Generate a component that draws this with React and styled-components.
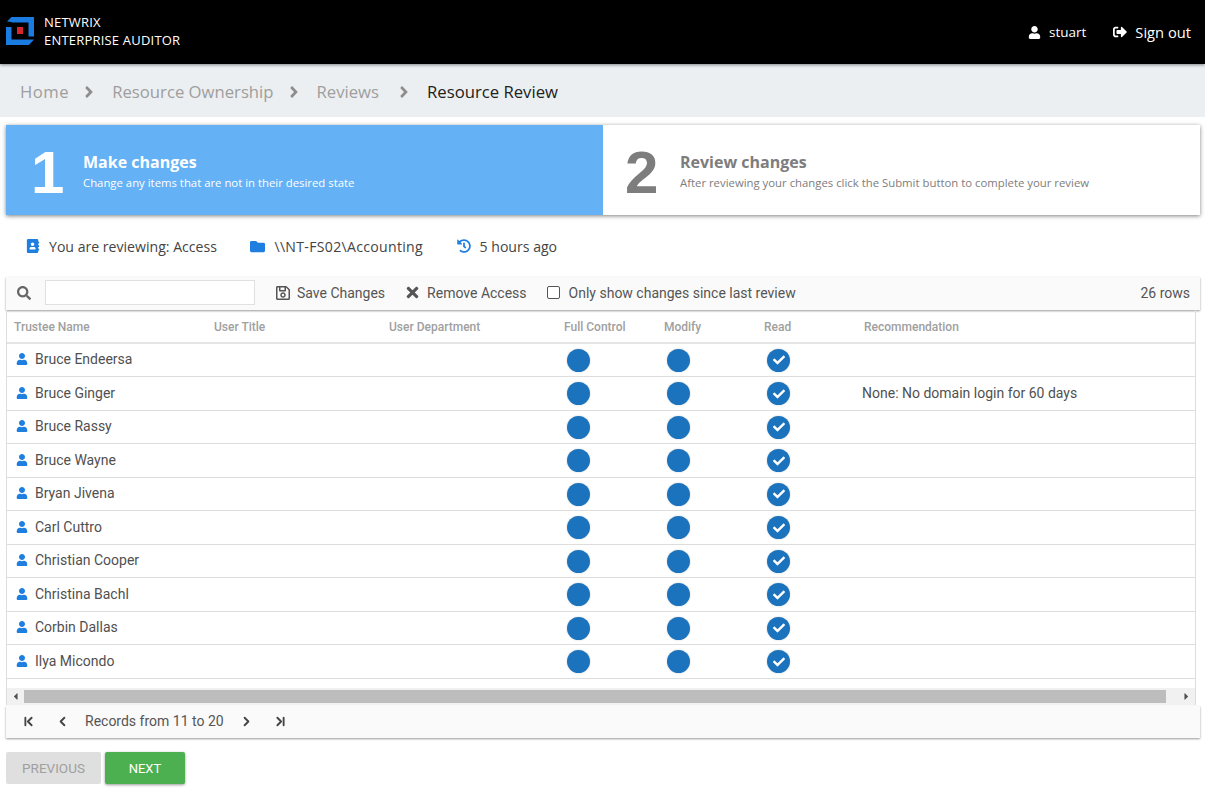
import React from 'react';
import styled, { createGlobalStyle } from 'styled-components';
import {
  FaUser,
  FaSignOutAlt,
  FaAngleRight,
  FaFolder,
  FaHistory,
  FaAddressBook,
  FaSearch,
  FaRegSave,
  FaTimes,
  FaCheck,
  FaCaretLeft,
  FaCaretRight,
} from 'react-icons/fa';
import { ChevronFirst, ChevronLast, ChevronLeft, ChevronRight } from 'lucide-react';

const rows = [
  { name: 'Bruce Endeersa' },
  { name: 'Bruce Ginger', recommendation: 'None: No domain login for 60 days' },
  { name: 'Bruce Rassy' },
  { name: 'Bruce Wayne' },
  { name: 'Bryan Jivena' },
  { name: 'Carl Cuttro' },
  { name: 'Christian Cooper' },
  { name: 'Christina Bachl' },
  { name: 'Corbin Dallas' },
  { name: 'Ilya Micondo' },
];

const columns = ['Trustee Name', 'User Title', 'User Department', 'Full Control', 'Modify', 'Read', 'Recommendation'];

const crumbs = [
  { label: 'Home', spacing: '0.5px', trail: '0' },
  { label: 'Resource Ownership', spacing: '0', trail: '0' },
  { label: 'Reviews', spacing: '0', trail: '5px' },
];

const Logo = () => (
  <svg width="28" height="28" viewBox="0 0 28 28">
    <path d="M1 4.5 L5.5 0 H28 V19.5 H22.5 V5.5 H5.5 V5 Z" fill="#1a7be0" />
    <path d="M0 10 H5.5 V22.5 H28 L23 28 H0 Z" fill="#1a7be0" />
    <rect x="11" y="10" width="6" height="7" fill="#d8262f" />
  </svg>
);

const App = () => {
  return (
    <Page>
      <GlobalStyle />
      <Header>
        <Brand>
          <Logo />
          <BrandText>
            <span>NETWRIX</span>
            <span>ENTERPRISE AUDITOR</span>
          </BrandText>
        </Brand>
        <HeaderLinks>
          <HeaderLink $size="13.5px">
            <FaUser size={13} />
            stuart
          </HeaderLink>
          <HeaderLink $size="14.7px">
            <FaSignOutAlt size={14} />
            Sign out
          </HeaderLink>
        </HeaderLinks>
      </Header>

      <Breadcrumb>
        {crumbs.map((crumb) => (
          <React.Fragment key={crumb.label}>
            <Crumb $spacing={crumb.spacing} $trail={crumb.trail}>
              {crumb.label}
            </Crumb>
            <CrumbArrow>
              <FaAngleRight size={18} />
            </CrumbArrow>
          </React.Fragment>
        ))}
        <Crumb $current>Resource Review</Crumb>
      </Breadcrumb>

      <Steps>
        <Step $active>
          <StepNumber $active>1</StepNumber>
          <StepText>
            <StepTitle $active>Make changes</StepTitle>
            <StepHint $active>Change any items that are not in their desired state</StepHint>
          </StepText>
        </Step>
        <Step>
          <StepNumber>2</StepNumber>
          <StepText>
            <StepTitle>Review changes</StepTitle>
            <StepHint>After reviewing your changes click the Submit button to complete your review</StepHint>
          </StepText>
        </Step>
      </Steps>

      <InfoRow>
        <InfoItem>
          <FaAddressBook size={14} />
          You are reviewing: Access
        </InfoItem>
        <InfoItem>
          <FaFolder size={15} />
          <PathText>\\NT-FS02\Accounting</PathText>
        </InfoItem>
        <InfoItem>
          <FaHistory size={14} />
          5 hours ago
        </InfoItem>
      </InfoRow>

      <Toolbar>
        <SearchIcon>
          <FaSearch size={14} />
        </SearchIcon>
        <SearchInput />
        <ToolButton $gap="6px" $after="19px">
          <FaRegSave size={16} />
          Save Changes
        </ToolButton>
        <ToolButton $gap="6px" $after="20px">
          <FaTimes size={17} />
          Remove Access
        </ToolButton>
        <CheckLabel>
          <CheckBox />
          Only show changes since last review
        </CheckLabel>
        <RowCount>26 rows</RowCount>
      </Toolbar>

      <Table>
        <HeadRow>
          {columns.map((column) => (
            <HeadCell key={column}>{column}</HeadCell>
          ))}
        </HeadRow>
        {rows.map((row) => (
          <Row key={row.name}>
            <NameCell>
              <FaUser size={12} />
              {row.name}
            </NameCell>
            <span />
            <span />
            <Dot />
            <Dot />
            <Dot>
              <FaCheck size={12} />
            </Dot>
            <Recommendation>{row.recommendation}</Recommendation>
          </Row>
        ))}
        <Spacer />
        <Scrollbar>
          <ScrollArrow>
            <FaCaretLeft size={11} />
          </ScrollArrow>
          <ScrollThumb />
          <ScrollArrow>
            <FaCaretRight size={11} />
          </ScrollArrow>
        </Scrollbar>
      </Table>

      <Pager>
        <PagerButton>
          <ChevronFirst size={15} strokeWidth={3} />
        </PagerButton>
        <PagerButton>
          <ChevronLeft size={15} strokeWidth={3} />
        </PagerButton>
        <PagerText>Records from 11 to 20</PagerText>
        <PagerButton>
          <ChevronRight size={15} strokeWidth={3} />
        </PagerButton>
        <PagerButton>
          <ChevronLast size={15} strokeWidth={3} />
        </PagerButton>
      </Pager>

      <Actions>
        <PrevButton>PREVIOUS</PrevButton>
        <NextButton>NEXT</NextButton>
      </Actions>
    </Page>
  );
};

const GlobalStyle = createGlobalStyle`
  * {
    box-sizing: border-box;
  }

  body {
    margin: 0;
    background: #fff;
    font-family: 'Open Sans', sans-serif;
  }
`;

const Page = styled.div`
  width: 1205px;
  height: 802px;
  overflow: hidden;
`;

const Header = styled.header`
  position: relative;
  z-index: 1;
  height: 64px;
  display: flex;
  align-items: center;
  justify-content: space-between;
  padding: 0 14px 0 6px;
  background: #000;
  box-shadow: 0 1px 3px rgba(0, 0, 0, 0.45);
`;

const Brand = styled.div`
  display: flex;
  align-items: center;
  gap: 10px;
  padding-bottom: 2px;
`;

const BrandText = styled.div`
  display: flex;
  flex-direction: column;
  font-size: 13px;
  line-height: 18px;
  letter-spacing: 0.2px;
  color: #fff;
`;

const HeaderLinks = styled.div`
  display: flex;
  gap: 27px;
`;

const HeaderLink = styled.a`
  display: flex;
  align-items: center;
  gap: 8px;
  font-size: ${(p) => p.$size};
  color: #fff;
`;

const Breadcrumb = styled.nav`
  height: 53px;
  display: flex;
  align-items: center;
  padding: 2px 0 0 20px;
  background: #eceff1;
`;

const Crumb = styled.span`
  padding-right: ${(p) => p.$trail || 0};
  font-size: 16.7px;
  letter-spacing: ${(p) => p.$spacing || 0};
  color: ${(p) => (p.$current ? '#212121' : '#9e9e9e')};
`;

const CrumbArrow = styled.span`
  display: flex;
  margin: 0 14px 0 11px;
  color: #8d8d8d;
`;

const Steps = styled.section`
  display: flex;
  height: 90px;
  margin: 8px 5px 0 6px;
  background: #fff;
  box-shadow: 0 1px 4px rgba(0, 0, 0, 0.5);
`;

const Step = styled.div`
  display: flex;
  align-items: center;
  flex: 0 0 ${(p) => (p.$active ? '597px' : 'auto')};
  flex-grow: ${(p) => (p.$active ? 0 : 1)};
  padding-left: ${(p) => (p.$active ? '25px' : '22px')};
  background: ${(p) => (p.$active ? '#64b1f5' : '#fff')};
`;

const StepNumber = styled.div`
  width: ${(p) => (p.$active ? '52px' : '55px')};
  padding-top: 6px;
  font-family: 'Liberation Sans', sans-serif;
  font-size: 60px;
  font-weight: 700;
  line-height: 1;
  color: ${(p) => (p.$active ? '#fff' : '#7d7d7d')};
`;

const StepText = styled.div`
  display: flex;
  flex-direction: column;
  gap: 2px;
`;

const StepTitle = styled.div`
  font-size: 16px;
  font-weight: 700;
  line-height: 22px;
  color: ${(p) => (p.$active ? '#fff' : '#7d7d7d')};
`;

const StepHint = styled.div`
  font-size: 11.35px;
  line-height: 15px;
  color: ${(p) => (p.$active ? '#fff' : '#7d7d7d')};
`;

const InfoRow = styled.div`
  height: 62px;
  display: flex;
  align-items: center;
  gap: 33.5px;
  padding-left: 26px;
`;

const InfoItem = styled.div`
  display: flex;
  align-items: center;
  gap: 9px;
  font-size: 14.1px;
  color: #444;

  svg {
    color: #1e7fe0;
  }
`;

const PathText = styled.span`
  letter-spacing: 0.3px;
`;

const Toolbar = styled.div`
  height: 33px;
  display: flex;
  align-items: center;
  margin: 0 5px 0 6px;
  padding: 0 10px 2px 0;
  font-family: Roboto, sans-serif;
  font-size: 14px;
  color: #555;
  background: #fafafa;
  box-shadow: 0 1px 2px rgba(0, 0, 0, 0.4);
`;

const SearchIcon = styled.span`
  display: flex;
  width: 39px;
  padding-left: 11px;
  color: #666;
`;

const SearchInput = styled.input`
  width: 210px;
  height: 25px;
  margin-right: 20px;
  border: 1px solid #e0e0e0;
  background: #fff;
`;

const ToolButton = styled.span`
  display: flex;
  align-items: center;
  gap: ${(p) => p.$gap};
  margin-right: ${(p) => p.$after};

  svg {
    color: #555;
  }
`;

const CheckLabel = styled.label`
  display: flex;
  align-items: center;
  gap: 9px;
`;

const CheckBox = styled.span`
  width: 13px;
  height: 13px;
  border: 1px solid #555;
  border-radius: 2px;
  background: #fff;
`;

const RowCount = styled.span`
  margin-left: auto;
`;

const Table = styled.div`
  width: 1190px;
  margin-left: 6px;
  border-right: 1px solid #ddd;
  border-left: 1px solid #ddd;
  font-family: Roboto, sans-serif;
`;

const gridColumns = '200px 175px 175px 100px 100px 100px 1fr';

const HeadRow = styled.div`
  height: 33.5px;
  display: grid;
  grid-template-columns: ${gridColumns};
  align-items: center;
  padding-top: 2px;
  border-bottom: 2px solid #e5e5e5;
`;

const HeadCell = styled.div`
  padding-left: 7px;
  font-size: 12px;
  font-weight: 500;
  color: #a0a0a0;
`;

const Row = styled.div`
  height: 33.5px;
  display: grid;
  grid-template-columns: ${gridColumns};
  align-items: center;
  border-bottom: 1px solid #ddd;
`;

const NameCell = styled.div`
  display: flex;
  align-items: center;
  gap: 7px;
  padding: 0 0 1px 9px;
  font-size: 14px;
  color: #505050;

  svg {
    color: #1e7fe0;
  }
`;

const Dot = styled.span`
  display: flex;
  align-items: center;
  justify-content: center;
  width: 23px;
  height: 23px;
  margin: 1px 0 0 10px;
  border-radius: 50%;
  color: #fff;
  background: #1c73bd;
  box-shadow: 0 0 2px rgba(0, 0, 0, 0.2);
`;

const Recommendation = styled.div`
  padding: 0 0 1px 5px;
  font-size: 14px;
  color: #505050;
`;

const Spacer = styled.div`
  height: 9px;
`;

const Scrollbar = styled.div`
  height: 17px;
  display: flex;
  align-items: center;
  background: #f1f1f1;
`;

const ScrollArrow = styled.span`
  flex: 0 0 17px;
  display: flex;
  justify-content: center;
  color: #505050;
`;

const ScrollThumb = styled.div`
  flex: 1;
  height: 13px;
  margin-right: 12px;
  background: #bdbdbd;
`;

const Pager = styled.div`
  height: 32px;
  display: flex;
  align-items: center;
  margin: 1px 5px 0 6px;
  padding-left: 15px;
  font-family: Roboto, sans-serif;
  font-size: 14px;
  color: #555;
  background: #fafafa;
  box-shadow: 0 1px 2px rgba(0, 0, 0, 0.4);
`;

const PagerButton = styled.span`
  display: flex;
  width: 34px;
  color: #444;
`;

const PagerText = styled.span`
  width: 154px;
  margin: 0 0 1px -4px;
`;

const Actions = styled.div`
  display: flex;
  gap: 4px;
  margin: 14px 0 0 6px;
`;

const PrevButton = styled.button`
  width: 95px;
  height: 32px;
  padding-top: 2px;
  border: 0;
  border-radius: 2px;
  font-family: Roboto, sans-serif;
  font-size: 13.5px;
  color: #a0a0a0;
  background: #dfdfdf;
`;

const NextButton = styled.button`
  width: 80px;
  height: 32px;
  padding-top: 2px;
  border: 0;
  border-radius: 2px;
  font-family: Roboto, sans-serif;
  font-size: 13px;
  color: #fff;
  background: #4caf50;
  box-shadow: 0 1px 3px rgba(0, 0, 0, 0.4);
`;

export default App;
